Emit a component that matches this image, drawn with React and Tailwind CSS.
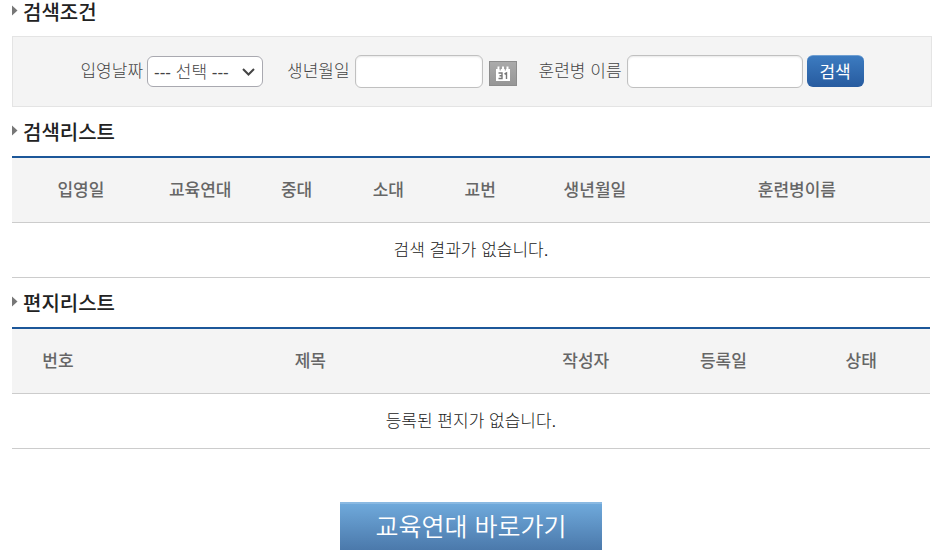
import { useState } from 'react';

const searchColumns = [
  { label: '입영일', width: 'w-[15%]' },
  { label: '교육연대', width: 'w-[11%]' },
  { label: '중대', width: 'w-[10%]' },
  { label: '소대', width: 'w-[10%]' },
  { label: '교번', width: 'w-[10%]' },
  { label: '생년월일', width: 'w-[15%]' },
  { label: '훈련병이름', width: 'w-[29%]' },
];

const letterColumns = [
  { label: '번호', width: 'w-[10%]' },
  { label: '제목', width: 'w-[45%]' },
  { label: '작성자', width: 'w-[15%]' },
  { label: '등록일', width: 'w-[15%]' },
  { label: '상태', width: 'w-[15%]' },
];

function SectionTitle({ children }) {
  return (
    <h2 className="flex items-center gap-[5px] mb-[10px] text-[20px] leading-[26px] font-medium text-[#222]">
      <svg width="6" height="16" viewBox="0 0 6 16" aria-hidden="true">
        <path d="M0 0.5 L5.5 5.5 L0 10.5 Z" fill="#777" />
      </svg>
      {children}
    </h2>
  );
}

function ListTable({ columns, emptyText }) {
  return (
    <table className="w-full table-fixed border-separate border-spacing-0 border-t-2 border-[#1c5799] text-[17px] leading-6">
      <thead>
        <tr>
          {columns.map(({ label, width }) => (
            <th key={label} scope="col" className={`${width} pt-[21px] pb-[19px] bg-[#f4f4f4] border-b border-[#ccc] font-medium text-[#666]`}>
              {label}
            </th>
          ))}
        </tr>
      </thead>
      <tbody>
        <tr>
          <td colSpan={columns.length} className="pt-4 pb-[14px] border-b border-[#ccc] text-center font-light text-[#222]">
            {emptyText}
          </td>
        </tr>
      </tbody>
    </table>
  );
}

function CalendarIcon() {
  return (
    <svg width="16" height="16" viewBox="0 0 16 16" aria-hidden="true">
      <path d="M1 3h14v12H1z" fill="#fff" />
      <path d="M2.5 0.5h2v4h-2zM7 0.5h2v4H7zM11.5 0.5h2v4h-2z" fill="#fff" />
      <path d="M5.2 1.5v3M10.3 1.5v3" stroke="#999" />
      <path d="M3.5 7h3.5v5.5H3.5M4.5 9.7H7M9.5 8l2-1v6" fill="none" stroke="#777" strokeWidth="1.4" />
    </svg>
  );
}

export default function App() {
  const [enterDate, setEnterDate] = useState('');
  const [birth, setBirth] = useState('');
  const [name, setName] = useState('');

  return (
    <div className="pl-3 pr-[15px] bg-white font-['Liberation_Sans','Noto_Sans_CJK_KR',sans-serif]">
      <SectionTitle>검색조건</SectionTitle>
      <form
        onSubmit={(e) => e.preventDefault()}
        className="flex flex-wrap items-center justify-center py-[18px] border border-[#e4e4e4] bg-[#f4f4f4] text-[17px] leading-6 font-light text-[#444]"
      >
        <label htmlFor="enterDate" className="mr-1">입영날짜</label>
        <div className="relative mr-6">
          <select
            id="enterDate"
            value={enterDate}
            onChange={(e) => setEnterDate(e.target.value)}
            className="block appearance-none w-[116px] h-[31px] pl-[6px] pt-[2px] border border-[#a9a9b0] rounded-md bg-white text-[#444]"
          >
            <option value="">--- 선택 ---</option>
          </select>
          <svg className="absolute right-2 top-3 pointer-events-none" width="13" height="8" viewBox="0 0 13 8" aria-hidden="true">
            <path d="M1 1l5.5 5.5L12 1" fill="none" stroke="#444" strokeWidth="2" />
          </svg>
        </div>

        <label htmlFor="birth" className="mr-[5px]">생년월일</label>
        <input
          id="birth"
          type="text"
          value={birth}
          onChange={(e) => setBirth(e.target.value)}
          className="w-32 h-[33px] mr-[6px] px-2 border border-[#c0c0c0] rounded-md bg-white shadow-[inset_0_1px_2px_#e8e8e8]"
        />
        <button
          type="button"
          aria-label="달력"
          className="flex items-center justify-center w-7 h-[25px] mt-1 mr-[22px] border border-[#8c8c8c] bg-linear-to-b from-[#aaa] to-[#969696]"
        >
          <CalendarIcon />
        </button>

        <label htmlFor="name" className="mr-[5px]">훈련병 이름</label>
        <input
          id="name"
          type="text"
          value={name}
          onChange={(e) => setName(e.target.value)}
          className="w-44 h-[33px] mr-1 px-2 border border-[#c0c0c0] rounded-md bg-white shadow-[inset_0_1px_2px_#e8e8e8]"
        />
        <button
          type="submit"
          className="self-start w-[57px] h-8 pt-[2px] rounded-md border-t border-[#6f9fd2] bg-linear-to-b from-[#3c7bc0] to-[#275b9f] font-normal text-white"
        >
          검색
        </button>
      </form>

      <div className="pr-[2px]">
        <div className="pt-[13px]">
          <SectionTitle>검색리스트</SectionTitle>
          <ListTable columns={searchColumns} emptyText="검색 결과가 없습니다." />
        </div>
        <div className="pt-[13px]">
          <SectionTitle>편지리스트</SectionTitle>
          <ListTable columns={letterColumns} emptyText="등록된 편지가 없습니다." />
        </div>
        <div className="flex justify-center pt-[53px]">
          <a
            href="#regiment"
            className="px-9 h-12 border-t-2 border-[#8ab9e2] bg-linear-to-b from-[#6fa9db] to-[#4b79ab] text-[25px] leading-[46px] font-[350] text-white"
          >
            교육연대 바로가기
          </a>
        </div>
      </div>
    </div>
  );
}
